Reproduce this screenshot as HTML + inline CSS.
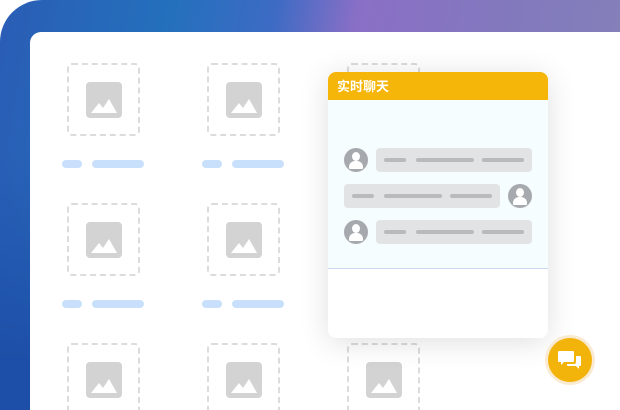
<!DOCTYPE html><html><head><meta charset="utf-8"><style>
*{margin:0;padding:0;box-sizing:border-box}
html,body{width:620px;height:410px;overflow:hidden}
body{background:#fff;position:relative;font-family:"Liberation Sans","Noto Sans CJK SC",sans-serif}
.bg{position:absolute;left:0;top:0;width:620px;height:410px;border-radius:42px 0 0 0;background:linear-gradient(100deg,#2a5db5 0%,#2470bd 25%,#3d6bc4 40%,#8a6fc6 52%,#8279bd 75%,#8584b8 100%)}
.bg2{position:absolute;left:0;top:150px;width:40px;height:260px;background:linear-gradient(180deg,rgba(80,120,200,.0),#1e4fa8 80%)}
.panel{position:absolute;left:30px;top:32px;width:590px;height:378px;background:#fff;border-radius:11px 0 0 0}
.tile{position:absolute;width:73px;height:73px;border:2px dashed #dcdcdc;border-radius:5px}
.tile i{position:absolute;left:17px;top:17px;width:36px;height:36px;background:#d3d3d3;border-radius:4px;overflow:hidden}
.p{position:absolute;height:8px;border-radius:4px;background:#c8e0fb}
.card{position:absolute;left:328px;top:72px;width:220px;height:266px;border-radius:8px;background:#fff;box-shadow:0 4px 30px rgba(0,0,0,.13);overflow:hidden}
.hd{height:28px;background:#f5b509;color:#fff;font-size:13px;font-weight:bold;line-height:29px;padding-left:9px}
.bd{height:169px;background:#f5fdff;border-bottom:1px solid #c9d8f3;position:relative}
.av{position:absolute;width:24px;height:24px;border-radius:50%;background:#a6a9ae;overflow:hidden}
.av:before{content:"";position:absolute;left:8px;top:4px;width:8px;height:9px;border-radius:50%;background:#fff}
.av:after{content:"";position:absolute;left:5px;top:13px;width:14px;height:8px;border-radius:6px 6px 1px 1px;background:#fff}
.bb{position:absolute;width:156px;height:24px;border-radius:4px;background:#e1e3e4}
.bb b{position:absolute;top:10px;height:4px;border-radius:2px;background:#bababa}
.fab{position:absolute;left:545px;top:335px;width:50px;height:50px;border-radius:50%;background:#f9ead2}
.fab i{position:absolute;left:3px;top:3px;width:44px;height:44px;border-radius:50%;background:#f2b30b}
</style></head><body>
<div class="bg"></div><div class="bg2"></div>
<div class="panel"></div>
<div class="tile" style="left:67px;top:63px"><i><svg width="36" height="36"><path d="M5 31 L13 21 L17 26 L23 17 L31 31Z" fill="#fff"/></svg></i></div>
<div class="tile" style="left:207px;top:63px"><i><svg width="36" height="36"><path d="M5 31 L13 21 L17 26 L23 17 L31 31Z" fill="#fff"/></svg></i></div>
<div class="tile" style="left:347px;top:63px"><i><svg width="36" height="36"><path d="M5 31 L13 21 L17 26 L23 17 L31 31Z" fill="#fff"/></svg></i></div>
<div class="tile" style="left:67px;top:203px"><i><svg width="36" height="36"><path d="M5 31 L13 21 L17 26 L23 17 L31 31Z" fill="#fff"/></svg></i></div>
<div class="tile" style="left:207px;top:203px"><i><svg width="36" height="36"><path d="M5 31 L13 21 L17 26 L23 17 L31 31Z" fill="#fff"/></svg></i></div>
<div class="tile" style="left:67px;top:343px"><i><svg width="36" height="36"><path d="M5 31 L13 21 L17 26 L23 17 L31 31Z" fill="#fff"/></svg></i></div>
<div class="tile" style="left:207px;top:343px"><i><svg width="36" height="36"><path d="M5 31 L13 21 L17 26 L23 17 L31 31Z" fill="#fff"/></svg></i></div>
<div class="tile" style="left:347px;top:343px"><i><svg width="36" height="36"><path d="M5 31 L13 21 L17 26 L23 17 L31 31Z" fill="#fff"/></svg></i></div>
<div class="p" style="left:62px;top:160px;width:20px"></div><div class="p" style="left:92px;top:160px;width:52px"></div>
<div class="p" style="left:202px;top:160px;width:20px"></div><div class="p" style="left:232px;top:160px;width:52px"></div>
<div class="p" style="left:62px;top:300px;width:20px"></div><div class="p" style="left:92px;top:300px;width:52px"></div>
<div class="p" style="left:202px;top:300px;width:20px"></div><div class="p" style="left:232px;top:300px;width:52px"></div>
<div class="card"><div class="hd">实时聊天</div><div class="bd">
<div class="av" style="left:16px;top:48px"></div>
<div class="bb" style="left:48px;top:48px"><b style="left:8px;width:22px"></b><b style="left:40px;width:58px"></b><b style="left:106px;width:42px"></b></div>
<div class="bb" style="left:16px;top:84px"><b style="left:8px;width:22px"></b><b style="left:40px;width:58px"></b><b style="left:106px;width:42px"></b></div>
<div class="av" style="left:180px;top:84px"></div>
<div class="av" style="left:16px;top:120px"></div>
<div class="bb" style="left:48px;top:120px"><b style="left:8px;width:22px"></b><b style="left:40px;width:58px"></b><b style="left:106px;width:42px"></b></div>
</div></div>
<div class="fab"><i><svg width="44" height="44"><path d="M11 13h14a1 1 0 0 1 1 1v9a1 1 0 0 1-1 1h-9l-3 3v-3h-2a1 1 0 0 1-1-1v-9a1 1 0 0 1 1-1z" fill="#fff"/><path d="M28 18h4a1 1 0 0 1 1 1v8a1 1 0 0 1-1 1h-1v3l-3-3h-8a1 1 0 0 1-1-1v-1h7a2 2 0 0 0 2-2z" fill="#fff"/></svg></i></div>
</body></html>
